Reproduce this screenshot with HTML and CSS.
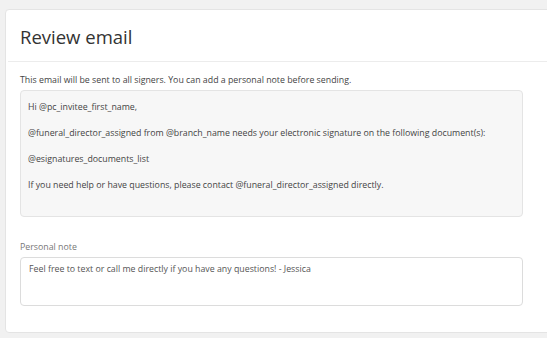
FILE: index.html
```html
<!DOCTYPE html>
<html>
<head>
<meta charset="utf-8">
<link rel="stylesheet" href="styles.css">
</head>
<body>
<div class="card">
  <div class="card-header">
    <h1 class="title">Review email</h1>
  </div>
  <div class="divider"></div>
  <div class="card-body">
    <p class="intro">This email will be sent to all signers. You can add a personal note before sending.</p>
    <div class="preview">
      <p>Hi @pc_invitee_first_name,</p>
      <p>@funeral_director_assigned from @branch_name needs your electronic signature on the following document(s):</p>
      <p>@esignatures_documents_list</p>
      <p>If you need help or have questions, please contact @funeral_director_assigned directly.</p>
    </div>
    <label class="label" for="note">Personal note</label>
    <textarea id="note" class="note">Feel free to text or call me directly if you have any questions! - Jessica</textarea>
  </div>
</div>
</body>
</html>
```
FILE: styles.css
```css
html, body {
  margin: 0;
  overflow: hidden;
}
body {
  background: #f1f1f1;
  padding: 9px 0 0 5px;
  height: 338px;
  box-sizing: border-box;
  font-family: "Open Sans", "Liberation Sans", sans-serif;
  color: #444;
}
.card {
  background: #fff;
  border: 1px solid #e4e4e4;
  border-radius: 4px;
  width: 560px;
  height: 324px;
  box-sizing: border-box;
}
.card-header {
  padding: 13px 14px 0 14px;
  height: 51px;
  box-sizing: border-box;
}
.title {
  margin: 0;
  font-size: 18.5px;
  font-weight: 400;
  line-height: 28px;
  color: #333;
}
.divider {
  margin-left: 2px;
  border-top: 1px solid #ececec;
}
.card-body {
  padding: 10px 0 0 14px;
}
.intro {
  margin: 0 0 2px 0;
  font-size: 8.8px;
  line-height: 16px;
  color: #444;
}
.preview {
  width: 503px;
  height: 127px;
  box-sizing: border-box;
  background: #f7f7f7;
  border: 1px solid #e4e4e4;
  border-radius: 4px;
  padding: 8px 7px;
  font-size: 8.8px;
  color: #444;
}
.preview p {
  margin: 0 0 10px 0;
  line-height: 16px;
}
.label {
  display: block;
  margin-top: 22px;
  font-size: 8.8px;
  line-height: 16px;
  color: #777;
}
.note {
  display: block;
  margin-top: 2px;
  width: 503px;
  height: 49px;
  box-sizing: border-box;
  border: 1px solid #dcdcdc;
  border-radius: 4px;
  padding: 3px 8px;
  font-family: "Open Sans", "Liberation Sans", sans-serif;
  font-size: 8.8px;
  line-height: 16px;
  color: #555;
  resize: none;
  outline: none;
}
```
